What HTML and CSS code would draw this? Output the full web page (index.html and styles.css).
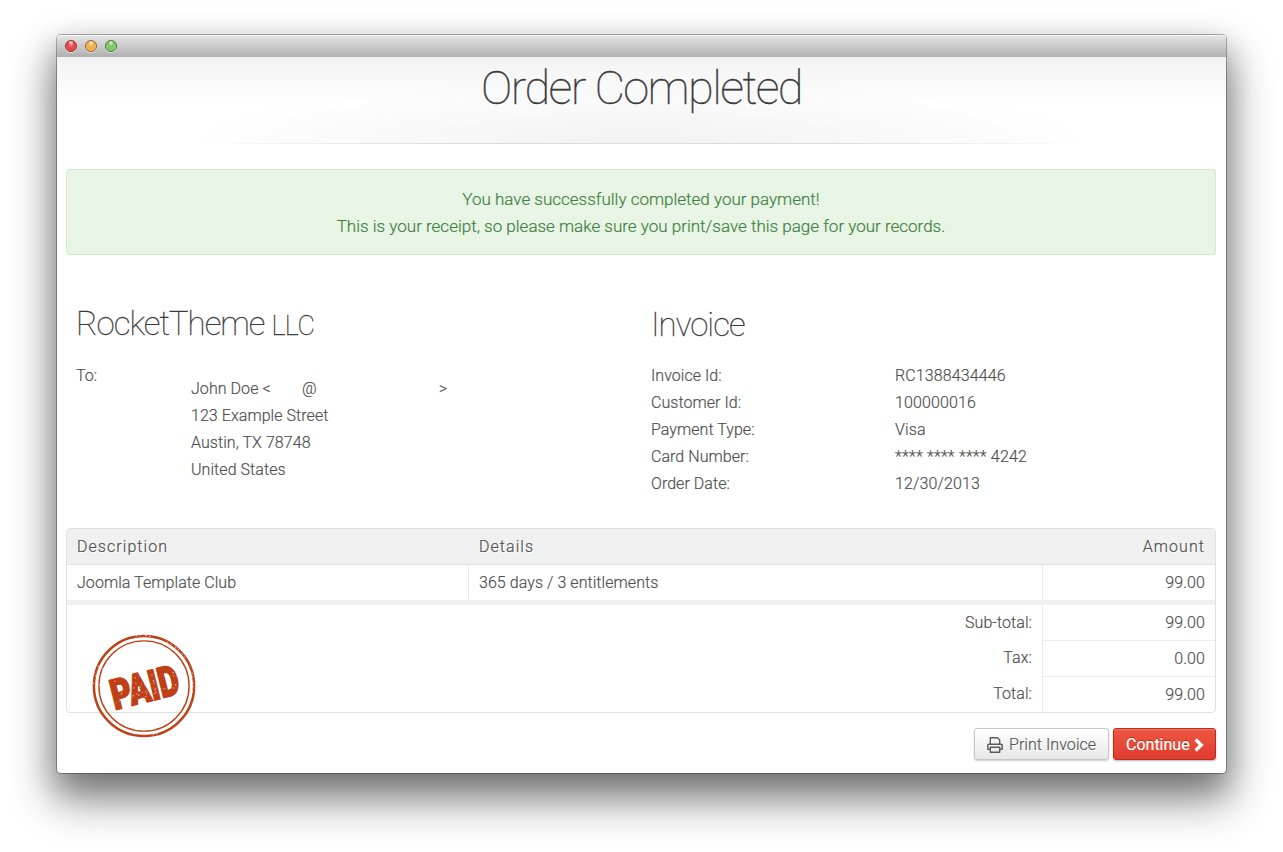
FILE: index.html
```html
<!DOCTYPE html>
<html lang="en">
<head>
<meta charset="utf-8">
<title>Order Completed</title>
<link rel="stylesheet" href="styles.css">
</head>
<body>
<main class="window">
  <div class="titlebar"><i class="light red"></i><i class="light amber"></i><i class="light green"></i></div>
  <header class="header"><h1>Order Completed</h1></header>
  <div class="content">
    <div class="alert"><p>You have successfully completed your payment!</p><p>This is your receipt, so please make sure you print/save this page for your records.</p></div>
    <div class="info">
      <section class="seller">
        <h2>RocketTheme <small>LLC</small></h2>
        <div class="recipient">
          <span class="to">To:</span>
          <address>
            <div class="email"><span class="name">John Doe &lt;</span><span class="at">@</span><span>&gt;</span></div>
            <div>123 Example Street</div><div>Austin, TX 78748</div><div>United States</div>
          </address>
        </div>
      </section>
      <section class="invoice">
        <h2>Invoice</h2>
        <dl>
          <dt>Invoice Id:</dt><dd>RC1388434446</dd>
          <dt>Customer Id:</dt><dd>100000016</dd>
          <dt>Payment Type:</dt><dd>Visa</dd>
          <dt>Card Number:</dt><dd class="card">**** **** **** 4242</dd>
          <dt>Order Date:</dt><dd>12/30/2013</dd>
        </dl>
      </section>
    </div>
    <div class="order">
      <div class="row head"><span>Description</span><span>Details</span><span class="num">Amount</span></div>
      <div class="row item"><span>Joomla Template Club</span><span>365 days / 3 entitlements</span><span class="num">99.00</span></div>
      <div class="totals">
        <div class="labels"><span>Sub-total:</span><span>Tax:</span><span>Total:</span></div>
        <div class="values"><span>99.00</span><span>0.00</span><span>99.00</span></div>
      </div>
      <svg class="stamp" width="106" height="106" viewBox="0 0 106 106">
        <g fill="none" stroke="#bf3f17">
          <circle cx="53" cy="53" r="50.1" stroke-width="2.5"/>
          <circle cx="53" cy="53" r="45.1" stroke-width="1.4"/>
        </g>
        <g transform="translate(53.5 53.5) rotate(-14)">
          <text class="paid" x="0" y="15.5" text-anchor="middle" textLength="69" lengthAdjust="spacingAndGlyphs">PAID</text>
        </g>
        <g fill="none" stroke="#fff" stroke-linecap="round" opacity=".75">
          <path stroke-width=".9" stroke-dasharray=".5 5 1 7 .5 9" d="M24 48l12 21M30 61l8 10M43 55l22-3M42 63l24-4M48 68l18-4M44 45l8-4M61 42l5 20M77 43l8-5M79 50l6 2"/>
          <path stroke-width=".7" stroke-dasharray=".4 3 1 5" d="M25 70q24-14 60-15M41 49q14 6 27-1M73 42l13 1M51 65l20-7"/>
          <path stroke-width="1" stroke-dasharray="1 3 .5 5" d="M3 39l7 17M2 50l9 8M7 33l6 3M45 3q8-2 16 1M76 9q13 6 20 19M94 75q-12 20-32 27M101 40q2 10 0 22"/>
        </g>
      </svg>
    </div>
    <div class="actions">
      <button class="btn print" type="button"><svg width="16" height="16" viewBox="0 0 16 16" fill="none" stroke="#5b5b5b" stroke-width="1.4" stroke-linejoin="round"><path d="M3.3 7.3V.8h7.2l2.2 2.2v4.3M3.3 12.2H.8V8.3q0-1 1-1h12.4q1 0 1 1v3.9h-2.5"/><path d="M3.3 10.3h9.4v4.9H3.3z"/></svg><span>Print Invoice</span></button>
      <button class="btn continue" type="button"><span>Continue</span><svg width="10" height="14" viewBox="0 0 10 14" fill="none" stroke="#fff" stroke-width="3.5"><path d="M1.6 1.4l5.6 5.6-5.6 5.6"/></svg></button>
    </div>
  </div>
</main>
</body>
</html>
```
FILE: styles.css
```css
* { box-sizing: border-box; }
body { margin: 0; width: 1283px; height: 852px; overflow: hidden; padding: 35px 57px 0; background: #fff; color: #4f4f4f; font: 300 16px/27px Roboto, sans-serif; letter-spacing: .06px; -webkit-text-stroke: .18px; }
h1, h2, p, dl, dd { margin: 0; font-weight: 300; }
.window { width: 1169px; height: 738px; border-radius: 4px; background: #fff; box-shadow: 0 0 0 1px rgba(0,0,0,.3), 0 23px 44px 4px rgba(0,0,0,.48), 0 12px 26px 2px rgba(0,0,0,.16); }
.titlebar { height: 22px; display: flex; align-items: center; gap: 8px; padding-left: 8px; border-radius: 4px 4px 0 0; background: linear-gradient(#e6e6e6, #b0b0b0); box-shadow: inset 0 1px #f4f4f4; }
.light { width: 12px; height: 12px; border-radius: 50%; border: 1px solid; box-shadow: 0 1px rgba(255,255,255,.5); }
.red { border-color: #8b3231; background: radial-gradient(ellipse at 50% 15%, #ffe0df 0, #ee5756 35%, #e63d42 60%, #ff9a99 100%); }
.amber { border-color: #96602c; background: radial-gradient(ellipse at 50% 15%, #fff1d6 0, #efaf53 35%, #eeb04f 60%, #ffe88c 100%); }
.green { border-color: #477a36; background: radial-gradient(ellipse at 50% 15%, #e4f8d9 0, #80c568 35%, #80c768 60%, #c4f29e 100%); }
.header { height: 87px; text-align: center; background: linear-gradient(90deg, transparent 12%, #dcdcdc 35%, #dcdcdc 65%, transparent 88%) bottom / 100% 1px no-repeat, radial-gradient(ellipse 460px 66px at 50% 100%, rgba(0,0,0,.055), transparent) no-repeat, linear-gradient(#f2f2f2, #fff 46px); }
h1 { padding-top: 1px; font-size: 47px; font-weight: 100; line-height: 60px; letter-spacing: -1.6px; color: #3a3a3a; -webkit-text-stroke: .4px; }
.content { padding: 25px 10px 0 9px; }
.alert { height: 86px; padding-top: 16px; border: 1px solid #d5e8c9; border-radius: 3px; text-align: center; background: #e8f5e4; color: #3f7f43; font-size: 17px; letter-spacing: 0; }
.info { height: 273px; display: flex; padding: 49px 0 0 10px; }
.seller { width: 565px; }
.invoice { flex: 1; padding-left: 10px; }
h2 { height: 58px; font-size: 33px; font-weight: 100; line-height: 39px; letter-spacing: -1px; color: #3a3a3a; -webkit-text-stroke: .3px; }
.invoice h2 { padding-top: 1px; }
h2 small { font-size: 27px; letter-spacing: -.5px; }
.recipient { display: flex; }
.to { width: 115px; }
address { padding-top: 13px; font-style: normal; }
.email { display: flex; }
.name { width: 111px; }
.at { width: 137px; }
dl { display: grid; grid-template-columns: 244px 1fr; }
dt { letter-spacing: .05px; }
dd { letter-spacing: .12px; }
.card { letter-spacing: .18px; }
.order { position: relative; height: 185px; border: 1px solid #e0e0e0; border-radius: 4px; }
.row { display: grid; grid-template-columns: 401px 574px 1fr; line-height: 35px; }
.row span { padding: 0 10px; }
.num { text-align: right; }
.head { height: 36px; background: #f0f0f0; border-bottom: 1px solid #e0e0e0; border-radius: 3px 3px 0 0; letter-spacing: 1.05px; text-shadow: 1px 1px #fff; }
.head span + span { padding-left: 11px; }
.item { height: 40px; border-bottom: 5px solid #f0f0f0; }
.item span + span { border-left: 1px solid #eaeaea; }
.totals { display: grid; grid-template-columns: 975px 1fr; height: 107px; text-align: right; }
.labels, .values { display: grid; grid-template-rows: 35px 36px 36px; line-height: 35px; }
.labels { padding-right: 10px; }
.values { border-left: 1px solid #eaeaea; }
.values span { padding-right: 10px; }
.values span + span { border-top: 1px solid #eaeaea; }
.stamp { position: absolute; left: 23.5px; top: 103.5px; overflow: visible; }
.paid { font: 900 42px Roboto, sans-serif; letter-spacing: 0; fill: #bf3f17; stroke: #bf3f17; stroke-width: 1.8px; }
.actions { display: flex; justify-content: flex-end; gap: 4px; padding-top: 15px; }
.btn { height: 32px; display: flex; align-items: center; border: 1px solid #c6c6c6; border-radius: 3px; padding: 1px 11px 0 12px; font: 300 16px/30px Roboto, sans-serif; letter-spacing: .06px; white-space: nowrap; color: #555; background: linear-gradient(#fff, #e8e8e8); box-shadow: 0 1px 2px rgba(0,0,0,.2); }
.btn svg { flex: none; }
.print { width: 135px; gap: 6px; }
.print span { text-shadow: 0 1px #fff; }
.continue { width: 103px; gap: 4px; color: #fff; font-weight: 400; border-color: #b72b20; background: linear-gradient(#ee583f, #df3b2f); box-shadow: inset 0 1px rgba(255,255,255,.2), 0 1px 2px rgba(0,0,0,.3); }
.continue span { text-shadow: 0 -1px rgba(0,0,0,.3); letter-spacing: 0; }
```
